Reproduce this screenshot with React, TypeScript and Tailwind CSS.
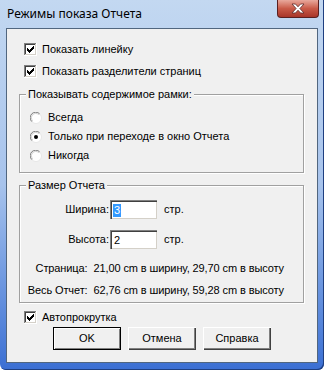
import type { ReactNode } from 'react';

const font = { fontFamily: '"Liberation Sans", Arial, sans-serif' };

function CheckBox() {
  const cols: [number, number][] = [
    [3, 5], [4, 6], [5, 7], [6, 6], [7, 5], [8, 4], [9, 3],
  ];
  return (
    <svg width="13" height="13" viewBox="0 0 13 13" shapeRendering="crispEdges" className="shrink-0">
      <rect x="0" y="0" width="13" height="13" fill="#ffffff" />
      <rect x="0" y="0" width="12" height="1" fill="#808080" />
      <rect x="0" y="0" width="1" height="12" fill="#808080" />
      <rect x="1" y="1" width="10" height="1" fill="#404040" />
      <rect x="1" y="1" width="1" height="10" fill="#404040" />
      <rect x="1" y="11" width="11" height="1" fill="#d4d0c8" />
      <rect x="11" y="1" width="1" height="11" fill="#d4d0c8" />
      {cols.map(([x, y]) => (
        <rect key={x} x={x} y={y} width="1" height="3" fill="#000000" />
      ))}
    </svg>
  );
}

function Radio({ on }: { on?: boolean }) {
  return (
    <svg width="12" height="12" viewBox="0 0 12 12" className="shrink-0">
      <circle cx="6" cy="6" r="5.5" fill="#ffffff" stroke="#e6e6e6" />
      <path d="M1.8 9.6 A5 5 0 0 1 9.6 1.8" fill="none" stroke="#808080" strokeWidth="1" />
      <path d="M2.7 8.8 A4 4 0 0 1 8.8 2.7" fill="none" stroke="#d0d0d0" strokeWidth="1" />
      {on && <circle cx="6" cy="6" r="2" fill="#000000" />}
    </svg>
  );
}

function Group({ title, className, children }: { title: string; className: string; children: ReactNode }) {
  return (
    <div className={`relative ml-[12px] w-[285px] border border-[#a0a0a0] shadow-[inset_1px_1px_0_#ffffff,1px_1px_0_#ffffff] ${className}`}>
      <span className="absolute -top-[8px] left-[6px] bg-[#f0f0f0] px-[2px] leading-[14px]">{title}</span>
      {children}
    </div>
  );
}

function Field({ label, value, selected }: { label: string; value: string; selected?: boolean }) {
  return (
    <div className="flex h-[19px] items-center">
      <span className="w-[89px] text-right">{label}</span>
      <div className="ml-[1px] flex h-[19px] w-[47px] items-center border-t border-l border-t-[#808080] border-l-[#808080] bg-white pl-[2px] shadow-[inset_1px_1px_0_#404040,inset_-1px_-1px_0_#d4d0c8]">
        {selected ? <span className="bg-[#3399ff] px-[1px] leading-[13px] text-white">{value}</span> : <span className="pl-[1px]">{value}</span>}
      </div>
      <span className="ml-[7px]">стр.</span>
    </div>
  );
}

function Btn({ children, primary }: { children: ReactNode; primary?: boolean }) {
  return (
    <button
      type="button"
      className={`flex h-[23px] w-[68px] items-center justify-center bg-[#f0f0f0] font-normal ${
        primary
          ? 'border border-black shadow-[inset_1px_1px_0_#ffffff,inset_-1px_-1px_0_#808080]'
          : 'shadow-[inset_1px_1px_0_#ffffff,inset_-1px_-1px_0_#404040,inset_-2px_-2px_0_#808080]'
      }`}
    >
      {children}
    </button>
  );
}

export default function App() {
  return (
    <div className="relative h-[373px] w-[326px] overflow-hidden bg-white text-[11px] text-black" style={font}>
      <div className="flex h-[370px] w-[324px] flex-col rounded-b-[6px] bg-gradient-to-b from-[#c3d8f1] via-[#a7c3ec] to-[#3b6fd3] px-[6px] pb-[7px] shadow-[inset_-1px_-1px_0_#1f3f80]">
        <div className="flex h-[28px] items-center pl-[1px] text-[12px]" style={{ fontFamily: '"Noto Sans", sans-serif' }}>
          Режимы показа Отчета
        </div>
        <div className="flex flex-1 flex-col border border-[#51667f] bg-[#f0f0f0] pt-[9px]">
          <div className="flex h-[22px] items-center gap-[5px] pl-[17px]">
            <CheckBox />
            <span>Показать линейку</span>
          </div>
          <div className="flex h-[22px] items-center gap-[5px] pl-[17px]">
            <CheckBox />
            <span>Показать разделители страниц</span>
          </div>

          <Group title="Показывать содержимое рамки:" className="mt-[12px] h-[79px] pl-[10px] pt-[13px]">
            <div className="flex h-[19px] items-center gap-[6px]">
              <Radio />
              <span>Всегда</span>
            </div>
            <div className="flex h-[19px] items-center gap-[6px]">
              <Radio on />
              <span>Только при переходе в окно Отчета</span>
            </div>
            <div className="flex h-[19px] items-center gap-[6px]">
              <Radio />
              <span>Никогда</span>
            </div>
          </Group>

          <Group title="Размер Отчета" className="mt-[12px] h-[118px] pt-[14px]">
            <div className="flex flex-col gap-[11px]">
              <Field label="Ширина:" value="3" selected />
              <Field label="Высота:" value="2" />
            </div>
            <div className="mt-[8px] flex flex-col pr-[19px] text-right tracking-[-0.1px]">
              <div className="flex h-[22px] items-center justify-end">Страница:&nbsp; 21,00 cm в ширину, 29,70 cm в высоту</div>
              <div className="flex h-[22px] items-center justify-end">Весь Отчет:&nbsp; 62,76 cm в ширину, 59,28 cm в высоту</div>
            </div>
          </Group>

          <div className="mt-[7px] flex h-[14px] items-center gap-[5px] pl-[17px]">
            <CheckBox />
            <span>Автопрокрутка</span>
          </div>
          <div className="mt-[3px] flex gap-[7px] pl-[46px]">
            <Btn primary>OK</Btn>
            <Btn>Отмена</Btn>
            <Btn>Справка</Btn>
          </div>
        </div>
      </div>
      <div className="absolute left-[277px] top-0 flex h-[18px] w-[42px] items-center justify-center rounded-b-[4px] border border-t-0 border-[#5a2020] bg-gradient-to-b from-[#e8a89c] via-[#c95a48] to-[#a8352a]">
        <svg width="14" height="11" viewBox="0 0 14 11">
          <path d="M1 1 H4.5 L7 3.8 L9.5 1 H13 L8.9 5.5 L13 10 H9.5 L7 7.2 L4.5 10 H1 L5.1 5.5 Z" fill="#ffffff" stroke="#5a2a2a" strokeWidth="0.8" strokeLinejoin="round" />
        </svg>
      </div>
    </div>
  );
}
